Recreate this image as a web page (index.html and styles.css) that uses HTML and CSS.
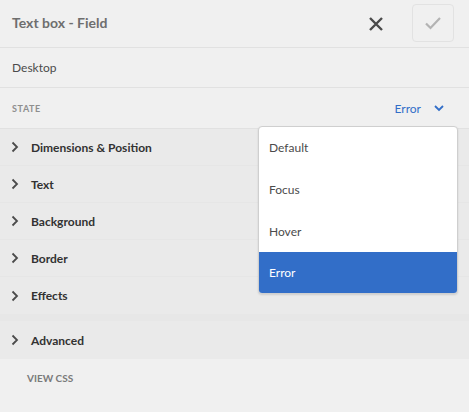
FILE: index.html
```html
<!DOCTYPE html>
<html>
<head>
<meta charset="utf-8">
<link rel="stylesheet" href="styles.css">
</head>
<body>
<div class="panel">
  <header class="header">
    <div class="title">Text box - Field</div>
    <div class="actions">
      <button class="icon-btn close" aria-label="Close">
        <svg width="16" height="16" viewBox="0 0 16 16"><path d="M2 2 L14 14 M14 2 L2 14" stroke="#4b4b4b" stroke-width="2.4" fill="none"/></svg>
      </button>
      <button class="icon-btn done" aria-label="Done">
        <svg width="18" height="14" viewBox="0 0 18 14"><path d="M2 7.5 L6.5 12 L16 2" stroke="#b3b3b3" stroke-width="2.2" fill="none"/></svg>
      </button>
    </div>
  </header>
  <div class="row device">Desktop</div>
  <div class="row state">
    <span class="label">STATE</span>
    <span class="select">Error
      <svg width="10" height="8" viewBox="0 0 10 8"><path d="M1 2 L5 6 L9 2" stroke="#326ec8" stroke-width="1.8" fill="none"/></svg>
    </span>
  </div>
  <div class="accordion">
    <div class="item"><svg class="chev" width="8" height="12" viewBox="0 0 8 12"><path d="M1.5 1.5 L6 6 L1.5 10.5" stroke="#4b4b4b" stroke-width="1.8" fill="none"/></svg>Dimensions &amp; Position</div>
    <div class="item"><svg class="chev" width="8" height="12" viewBox="0 0 8 12"><path d="M1.5 1.5 L6 6 L1.5 10.5" stroke="#4b4b4b" stroke-width="1.8" fill="none"/></svg>Text</div>
    <div class="item"><svg class="chev" width="8" height="12" viewBox="0 0 8 12"><path d="M1.5 1.5 L6 6 L1.5 10.5" stroke="#4b4b4b" stroke-width="1.8" fill="none"/></svg>Background</div>
    <div class="item"><svg class="chev" width="8" height="12" viewBox="0 0 8 12"><path d="M1.5 1.5 L6 6 L1.5 10.5" stroke="#4b4b4b" stroke-width="1.8" fill="none"/></svg>Border</div>
    <div class="item"><svg class="chev" width="8" height="12" viewBox="0 0 8 12"><path d="M1.5 1.5 L6 6 L1.5 10.5" stroke="#4b4b4b" stroke-width="1.8" fill="none"/></svg>Effects</div>
  </div>
  <div class="spacer"></div>
  <div class="item advanced"><svg class="chev" width="8" height="12" viewBox="0 0 8 12"><path d="M1.5 1.5 L6 6 L1.5 10.5" stroke="#4b4b4b" stroke-width="1.8" fill="none"/></svg>Advanced</div>
  <div class="view-css">VIEW CSS</div>

  <ul class="menu">
    <li>Default</li>
    <li>Focus</li>
    <li>Hover</li>
    <li class="selected">Error</li>
  </ul>
</div>
</body>
</html>
```

FILE: styles.css
```css
* { box-sizing: border-box; }
html, body { margin: 0; padding: 0; }
body {
  background: #f0f0f0;
  font-family: Lato, "Open Sans", sans-serif;
  color: #4b4b4b;
  width: 469px;
  height: 412px;
  overflow: hidden;
}
.panel { position: relative; width: 469px; height: 412px; background: #f0f0f0; }
.header {
  height: 48px;
  display: flex;
  align-items: center;
  justify-content: space-between;
  padding: 0 15px 0 12px;
  border-bottom: 1px solid #e1e1e1;
}
.title { font-size: 14px; font-weight: 700; color: #6e6e6e; padding-bottom: 2px; }
.actions { display: flex; align-items: center; gap: 26px; }
.icon-btn {
  background: transparent;
  border: 1px solid transparent;
  padding: 0;
  display: flex;
  align-items: center;
  justify-content: center;
}
.close { width: 20px; height: 20px; }
.done {
  width: 42px; height: 38px;
  border: 1px solid #e2e2e2;
  border-radius: 4px;
  margin-top: -1px;
}
.row {
  height: 40px;
  display: flex;
  align-items: center;
  padding: 0 12px;
  border-bottom: 1px solid #e1e1e1;
}
.device { font-size: 12px; color: #4b4b4b; }
.state { justify-content: space-between; padding-right: 25px; height: 41px; }
.label { font-size: 9px; font-weight: 700; color: #8e8e8e; letter-spacing: 0.6px; }
.select { font-size: 12px; color: #326ec8; display: flex; align-items: center; gap: 13px; }
.accordion { background: #eaeaea; }
.item {
  height: 37px;
  display: flex;
  align-items: center;
  padding-left: 11px;
  font-size: 12px;
  font-weight: 700;
  color: #323232;
  background: #eaeaea;
  border-bottom: 1px solid #e6e6e6;
}
.accordion .item:last-child { border-bottom: none; }
.chev { margin-right: 12px; }
.spacer { height: 7px; background: #e7e7e7; }
.advanced { height: 38px; border-bottom: none; }
.view-css {
  padding: 13px 0 0 27px;
  font-size: 10px;
  font-weight: 700;
  color: #7a7a7a;
}
.menu {
  position: absolute;
  left: 258px;
  top: 126px;
  width: 200px;
  margin: 0;
  padding: 0;
  list-style: none;
  background: #fff;
  border: 1px solid #cfcfcf;
  border-radius: 4px;
  box-shadow: 0 1px 2px rgba(0,0,0,0.12);
  overflow: hidden;
}
.menu li {
  height: 42px;
  display: flex;
  align-items: center;
  padding-left: 10px;
  font-size: 12px;
  color: #4b4b4b;
}
.menu li:first-child { height: 41px; }
.menu li.selected { background: #326ec8; color: #fff; height: 41px; }
```
